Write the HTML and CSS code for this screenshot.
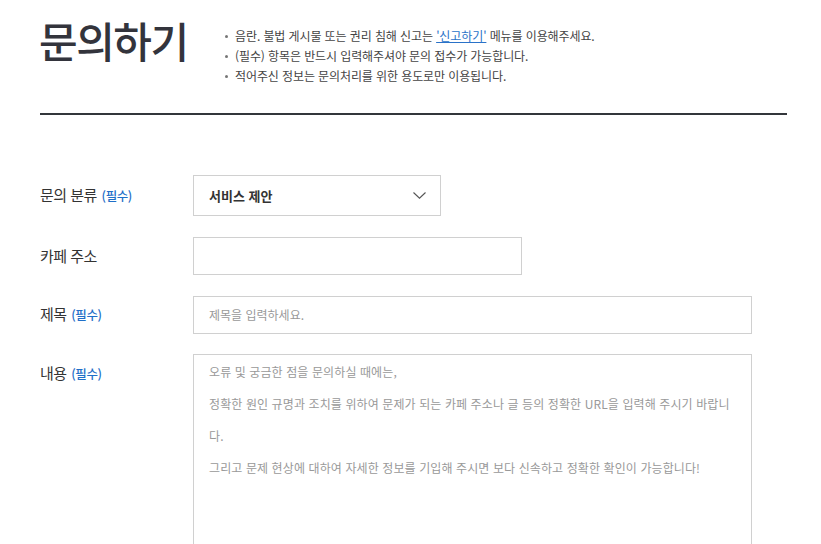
FILE: index.html
```html
<!DOCTYPE html>
<html lang="ko">
<head>
<meta charset="utf-8">
<title>문의하기</title>
<link rel="stylesheet" href="styles.css">
</head>
<body>
<div class="page">
  <header class="head">
    <h1 class="title">문의하기</h1>
    <ul class="notes">
      <li>음란. 불법 게시물 또는 권리 침해 신고는 <a class="link" href="#">'신고하기'</a> 메뉴를 이용해주세요.</li>
      <li>(필수) 항목은 반드시 입력해주셔야 문의 접수가 가능합니다.</li>
      <li>적어주신 정보는 문의처리를 위한 용도로만 이용됩니다.</li>
    </ul>
  </header>

  <form class="form">
    <div class="row row-select">
      <label class="label">문의 분류 <span class="req">(필수)</span></label>
      <div class="select">
        <span class="select-text">서비스 제안</span>
        <svg class="chev" width="13" height="7" viewBox="0 0 13 7"><path d="M0.5 0.5 L6.5 6.2 L12.5 0.5" fill="none" stroke="#555" stroke-width="1.1"/></svg>
      </div>
    </div>
    <div class="row">
      <label class="label">카페 주소</label>
      <input class="input input-mid" type="text">
    </div>
    <div class="row">
      <label class="label">제목 <span class="req">(필수)</span></label>
      <input class="input input-wide" type="text" placeholder="제목을 입력하세요.">
    </div>
    <div class="row row-top">
      <label class="label">내용 <span class="req">(필수)</span></label>
      <textarea class="textarea" placeholder="오류 및 궁금한 점을 문의하실 때에는,&#10;정확한 원인 규명과 조치를 위하여 문제가 되는 카페 주소나 글 등의 정확한 URL을 입력해 주시기 바랍니&#10;다.&#10;그리고 문제 현상에 대하여 자세한 정보를 기입해 주시면 보다 신속하고 정확한 확인이 가능합니다!"></textarea>
    </div>
  </form>
</div>
</body>
</html>
```

FILE: styles.css
```css
* { box-sizing: border-box; }
html, body { margin: 0; padding: 0; background: #fff; }
body {
  font-family: "Noto Sans CJK KR", "Noto Sans", sans-serif;
  color: #333;
}
.page {
  width: 747px;
  margin-left: 40px;
}
.head {
  display: flex;
  align-items: flex-start;
  border-bottom: 2px solid #33363b;
  height: 115px;
}
.title {
  margin: 15px 0 0 -1px;
  width: 185px;
  font-size: 42px;
  line-height: 50px;
  font-weight: 500;
  letter-spacing: -1.5px;
  color: #33343c;
}
.notes {
  list-style: none;
  margin: 26px 0 0 0;
  padding: 0;
  font-size: 12px;
  line-height: 20px;
  letter-spacing: -0.1px;
  color: #444;
}
.notes li {
  position: relative;
  padding-left: 11px;
}
.notes li::before {
  content: "";
  position: absolute;
  left: 1px;
  top: 9px;
  width: 3px;
  height: 3px;
  border-radius: 50%;
  background: #777;
}
.link {
  color: #2a72c8;
  text-decoration: underline;
}
.form {
  margin-top: 60px;
}
.row {
  display: flex;
  align-items: center;
  margin-bottom: 20px;
}
.row-select { margin-bottom: 21px; }
.row-top { align-items: flex-start; }
.label {
  width: 153px;
  flex: none;
  font-size: 15px;
  line-height: 38px;
  color: #333;
  letter-spacing: -0.5px;
}
.req {
  margin-left: 1px;
  font-size: 12.5px;
  font-weight: 500;
  color: #1f6fc8;
  letter-spacing: -0.4px;
}
.select {
  width: 248px;
  height: 41px;
  border: 1px solid #d0d0d0;
  display: flex;
  align-items: center;
  justify-content: space-between;
  padding: 0 14px 0 15px;
}
.select-text {
  font-size: 13px;
  font-weight: 700;
  color: #333;
}
.chev { display: block; }
.input {
  height: 38px;
  border: 1px solid #d0d0d0;
  padding: 0 15px;
  font-family: inherit;
  font-size: 12px;
  color: #333;
  outline: none;
}
.input::placeholder { color: #999; }
.input-mid { width: 329px; }
.input-wide { width: 559px; }
.textarea {
  display: block;
  width: 559px;
  height: 220px;
  border: 1px solid #d0d0d0;
  padding: 1px 15px;
  font-family: inherit;
  font-size: 12px;
  line-height: 32px;
  letter-spacing: 0.1px;
  color: #333;
  resize: none;
  outline: none;
}
.textarea::placeholder { color: #999; }
```
